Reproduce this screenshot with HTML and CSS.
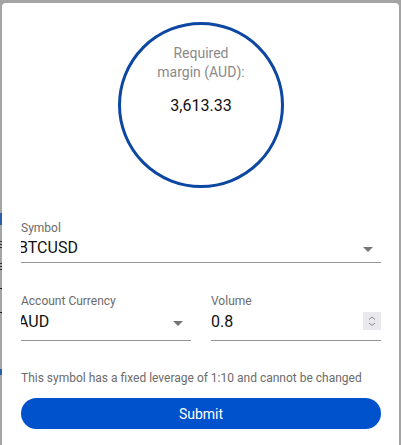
FILE: index.html
```html
<!DOCTYPE html>
<html lang="en">
<head>
<meta charset="utf-8">
<title>Required margin</title>
<link rel="stylesheet" href="styles.css">
</head>
<body>
<div class="backdrop">
  <span class="bd-mark bd-blue1"></span>
  <span class="bd-mark bd-dots1"></span>
  <span class="bd-mark bd-dots2"></span>
  <span class="bd-mark bd-dash1"></span>
  <span class="bd-mark bd-dash2"></span>
  <span class="bd-mark bd-blue2"></span>
</div>
<div class="card">
  <div class="circle">
    <div class="circle-label">Required margin (AUD):</div>
    <div class="circle-value">3,613.33</div>
  </div>

  <div class="field field-full">
    <label class="field-label">Symbol</label>
    <div class="field-control">
      <span class="field-value shifted">BTCUSD</span>
      <span class="caret"></span>
    </div>
  </div>

  <div class="row">
    <div class="field">
      <label class="field-label">Account Currency</label>
      <div class="field-control tall">
        <span class="field-value shifted">AUD</span>
        <span class="caret"></span>
      </div>
    </div>
    <div class="field">
      <label class="field-label">Volume</label>
      <div class="field-control tall">
        <span class="field-value">0.8</span>
        <span class="spinner">
          <svg width="18" height="18" viewBox="0 0 18 18"><path d="M6 7.5 L9 5 L12 7.5" fill="none" stroke="#8a8a8a" stroke-width="1"/><path d="M6 11 L9 13.5 L12 11" fill="none" stroke="#8a8a8a" stroke-width="1"/></svg>
        </span>
      </div>
    </div>
  </div>

  <p class="help">This symbol has a fixed leverage of 1:10 and cannot be changed</p>
  <button class="submit" type="button">Submit</button>
</div>
</body>
</html>
```

FILE: styles.css
```css
html, body {
  margin: 0;
  padding: 0;
}
body {
  background: #a4a4a4;
  font-family: Roboto, "Liberation Sans", sans-serif;
  height: 445px;
  overflow: hidden;
  position: relative;
}
.backdrop {
  position: absolute;
  left: 0;
  top: 0;
  width: 2px;
  height: 445px;
}
.bd-mark {
  position: absolute;
  left: 0;
  width: 2px;
}
.bd-blue1 { top: 213px; height: 12px; background: #2a5ea8; }
.bd-blue2 { top: 369px; height: 6px; background: #2a5ea8; }
.bd-dots1 { top: 241px; height: 9px; background: repeating-linear-gradient(#333 0 1px, transparent 1px 3px); }
.bd-dots2 { top: 263px; height: 9px; background: repeating-linear-gradient(#333 0 1px, transparent 1px 3px); }
.bd-dash1 { top: 288px; height: 1px; background: #222; }
.bd-dash2 { top: 312px; height: 1px; background: #222; }

.card {
  margin: 3px 2px 0 2px;
  background: #fff;
  border-radius: 4px 4px 0 0;
  height: 460px;
  padding: 19px 18px 0 19px;
  box-sizing: border-box;
}
.circle {
  width: 166px;
  height: 166px;
  box-sizing: border-box;
  border: 3px solid #0d47a1;
  border-radius: 50%;
  margin: 0 auto;
  display: flex;
  flex-direction: column;
  align-items: center;
  padding-top: 19px;
}
.circle-label {
  width: 100px;
  text-align: center;
  color: #8a8a8a;
  font-size: 14px;
  line-height: 19px;
}
.circle-value {
  margin-top: 14px;
  font-size: 16px;
  line-height: 19px;
  color: #111;
}
.field {
  display: flex;
  flex-direction: column;
  flex: 1;
  min-width: 0;
}
.field-full {
  margin-top: 33px;
}
.field-label {
  font-size: 12px;
  line-height: 14px;
  color: #6b6b6b;
}
.field-control {
  display: flex;
  align-items: flex-start;
  height: 28px;
  padding-top: 2px;
  box-sizing: border-box;
  border-bottom: 1px solid #949494;
  overflow: hidden;
}
.field-control.tall {
  height: 33px;
  padding-top: 3px;
}
.field-value {
  flex: 1;
  font-size: 16px;
  line-height: 19px;
  color: #111;
  padding-top: 1px;
}
.field-value.shifted {
  margin-left: -3px;
}
.caret {
  width: 0;
  height: 0;
  border-left: 5px solid transparent;
  border-right: 5px solid transparent;
  border-top: 5px solid #757575;
  margin-right: 8px;
  margin-top: 10px;
}
.spinner {
  width: 18px;
  height: 18px;
  background: #e9e9ed;
  display: flex;
  margin-top: 1px;
}
.row {
  display: flex;
  gap: 20px;
  margin-top: 31px;
}
.help {
  margin: 30px 0 0 0;
  font-size: 12px;
  line-height: 14px;
  color: #6b6b6b;
}
.submit {
  display: block;
  width: 100%;
  margin-top: 13px;
  height: 31px;
  border: 0;
  border-radius: 16px;
  background: #0052cc;
  color: #fff;
  font-family: Roboto, "Liberation Sans", sans-serif;
  font-size: 14px;
  padding: 0;
}
```
